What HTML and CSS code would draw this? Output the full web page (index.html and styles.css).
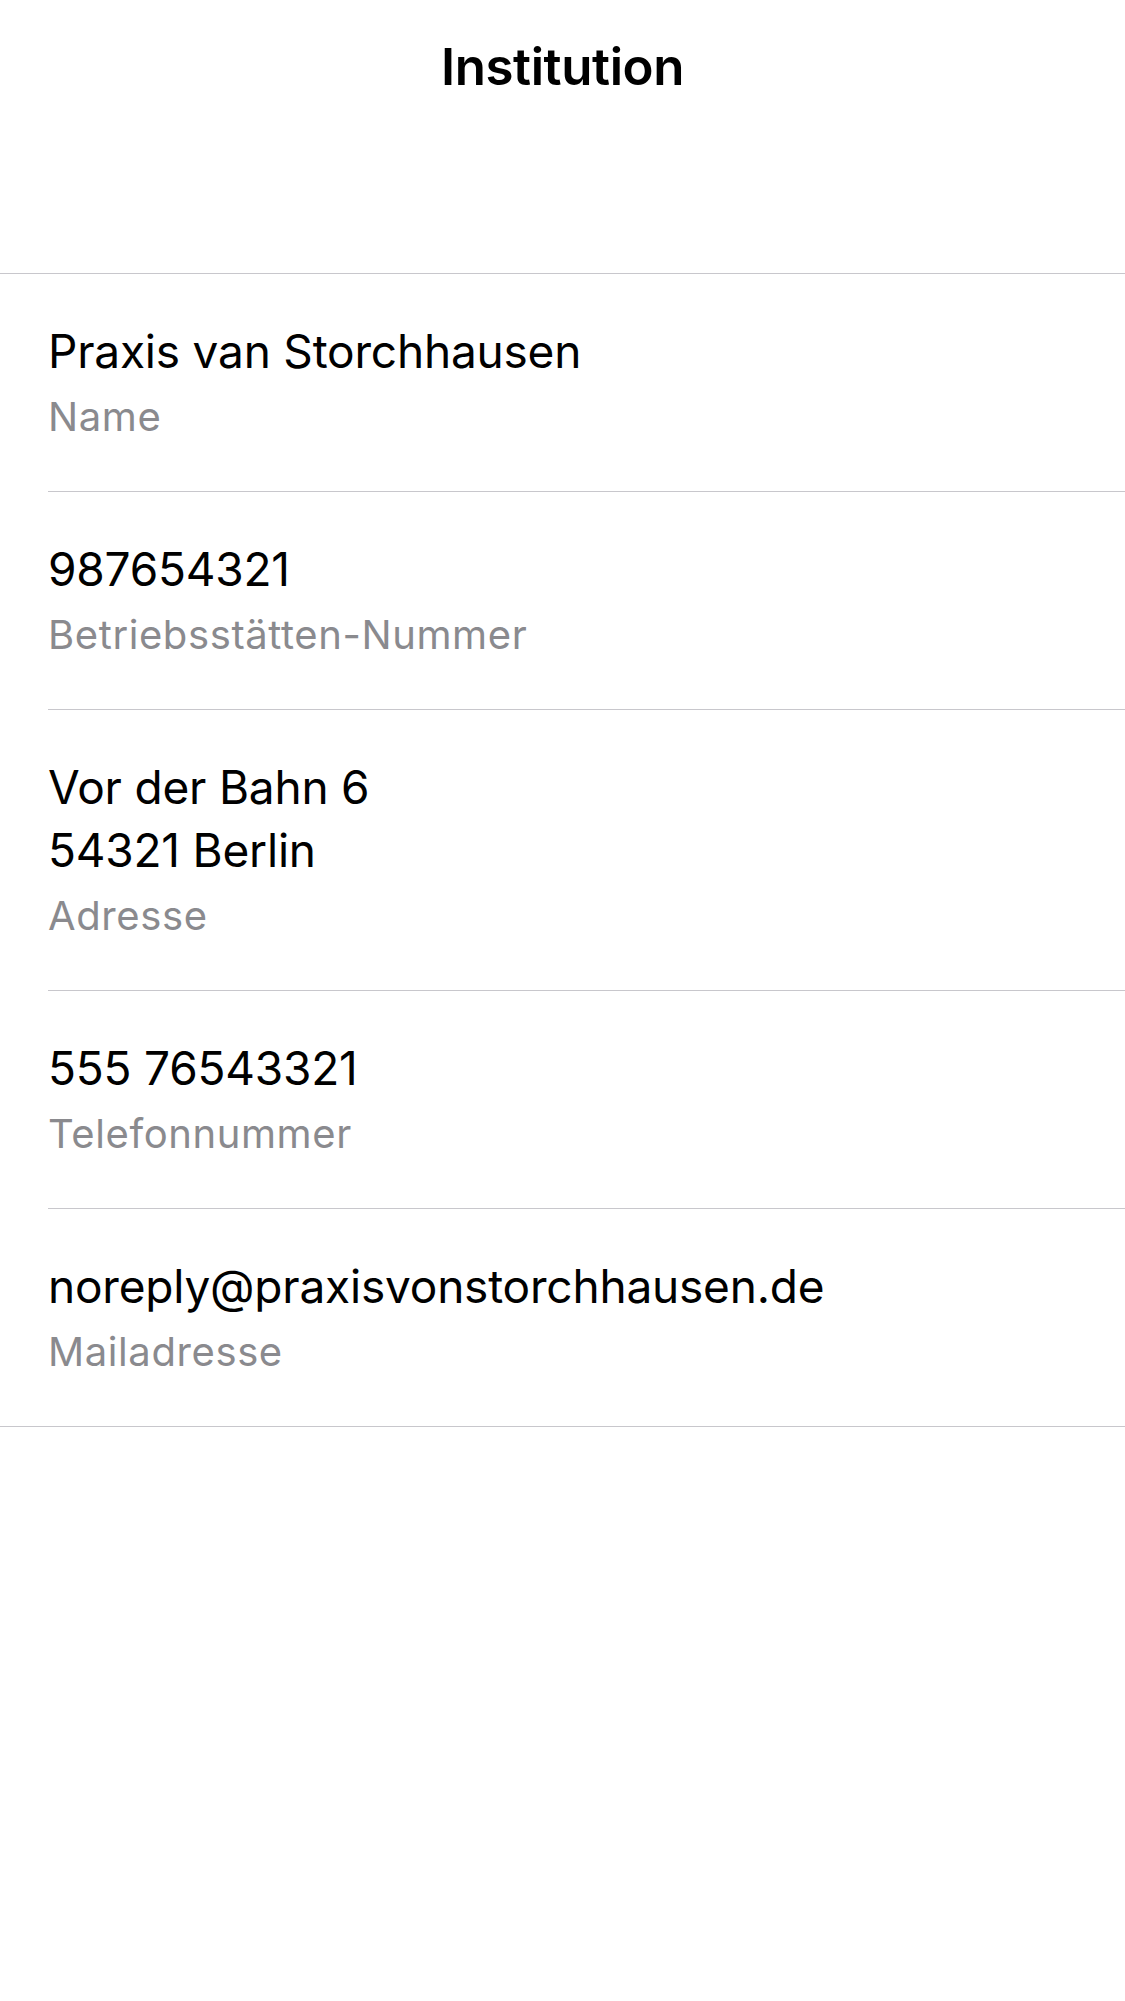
FILE: index.html
```html
<!DOCTYPE html>
<html lang="de">
<head>
<meta charset="utf-8">
<title>Institution</title>
<link rel="stylesheet" href="styles.css">
</head>
<body>
<header class="navbar">
  <h1 class="nav-title">Institution</h1>
</header>
<main class="content">
  <ul class="table">
    <li class="cell">
      <div class="value">Praxis van Storchhausen</div>
      <div class="label">Name</div>
    </li>
    <li class="cell">
      <div class="value">987654321</div>
      <div class="label">Betriebsstätten-Nummer</div>
    </li>
    <li class="cell">
      <div class="value">Vor der Bahn 6<br>54321 Berlin</div>
      <div class="label">Adresse</div>
    </li>
    <li class="cell">
      <div class="value">555 76543321</div>
      <div class="label">Telefonnummer</div>
    </li>
    <li class="cell">
      <div class="value">noreply@praxisvonstorchhausen.de</div>
      <div class="label">Mailadresse</div>
    </li>
  </ul>
</main>
</body>
</html>
```

FILE: styles.css
```css
* {
  box-sizing: border-box;
}

html, body {
  margin: 0;
  padding: 0;
  background: #ffffff;
}

body {
  width: 1125px;
  min-height: 2001px;
  font-family: Inter, "Noto Sans", "Liberation Sans", sans-serif;
  color: #000000;
  -webkit-font-smoothing: antialiased;
}

.navbar {
  height: 132px;
  display: flex;
  align-items: center;
  justify-content: center;
}

.nav-title {
  margin: 0;
  font-size: 51px;
  font-weight: 600;
  letter-spacing: -0.4px;
  line-height: 1;
}

.content {
  padding-top: 141px;
}

.table {
  list-style: none;
  margin: 0;
  padding: 0 0 0 48px;
  border-top: 1px solid #c8c7cc;
  border-bottom: 1px solid #c8c7cc;
}

.cell {
  padding: 46px 0 43px;
  border-bottom: 1px solid #c8c7cc;
}

.cell:last-child {
  border-bottom: none;
}

.value {
  font-size: 46px;
  line-height: 63px;
  letter-spacing: -0.2px;
  color: #000000;
}

.label {
  margin-top: 3px;
  font-size: 40px;
  line-height: 62px;
  letter-spacing: 0.6px;
  color: #8a8a8e;
}
```
